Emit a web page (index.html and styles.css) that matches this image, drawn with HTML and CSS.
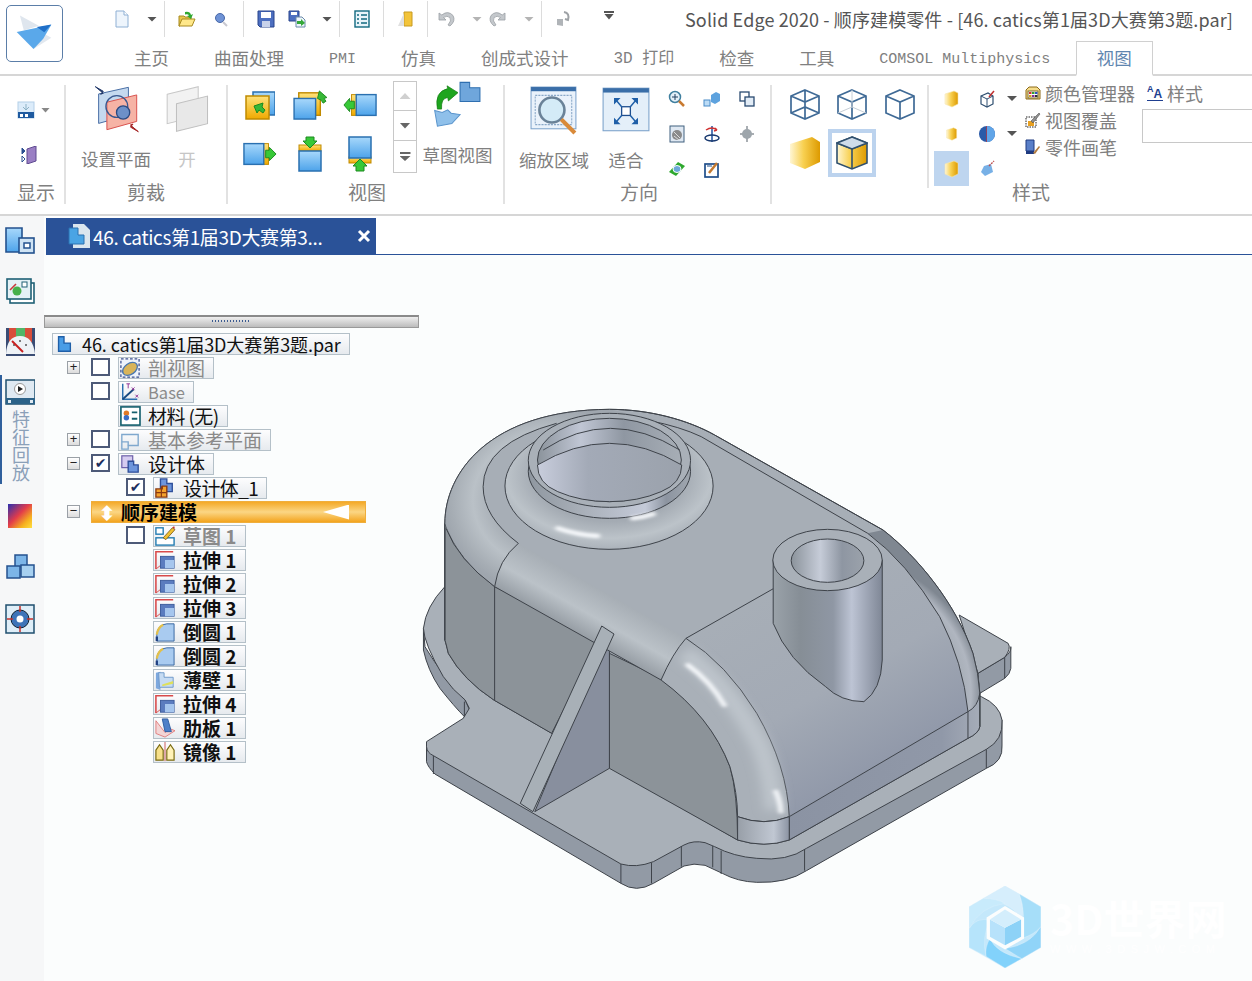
FILE: index.html
```html
<!DOCTYPE html>
<html lang="zh">
<head>
<meta charset="utf-8">
<title>Solid Edge 2020</title>
<link rel="stylesheet" href="styles.css">
</head>
<body>
<svg class="defs" aria-hidden="true">
  <defs>
    <linearGradient id="gy" x1="0" y1="0" x2="0" y2="1"><stop offset="0" stop-color="#ffe27a"/><stop offset="1" stop-color="#efa900"/></linearGradient>
    <linearGradient id="gb" x1="0" y1="0" x2="0" y2="1"><stop offset="0" stop-color="#a8d8fb"/><stop offset="1" stop-color="#4da3ea"/></linearGradient>
    <linearGradient id="gcube" x1="0" y1="0" x2="1" y2="0"><stop offset="0" stop-color="#fff6d4"/><stop offset=".45" stop-color="#f8d050"/><stop offset="1" stop-color="#dd9a00"/></linearGradient>
    <linearGradient id="gheat" x1="0" y1="0" x2="1" y2="1"><stop offset="0" stop-color="#2a2fb0"/><stop offset=".45" stop-color="#e23c4a"/><stop offset=".75" stop-color="#f6b020"/><stop offset="1" stop-color="#ffe040"/></linearGradient>
  </defs>
  <symbol id="doc" viewBox="0 0 18 18"><path d="M3 1h8l4 4v12H3z" fill="#eef5fc" stroke="#8fb0d4"/><path d="M11 1v4h4" fill="#fff" stroke="#8fb0d4"/></symbol>
  <symbol id="open" viewBox="0 0 18 18"><path d="M1 6h5l1 1h6v3H5l-3 6H1z" fill="#e7c64d" stroke="#a88a20"/><path d="M4 9h13l-3 7H1z" fill="#ffe88a" stroke="#a88a20"/><path d="M7 2q5-1 6 3l2-1-2 5-4-3 2-.5q-1-2-4-1z" fill="#30a830"/></symbol>
  <symbol id="find" viewBox="0 0 18 18"><circle cx="8" cy="8" r="4.500" fill="#6f93d6" stroke="#4868a8"/><path d="M11 12l4 4" stroke="#c8c8d0" stroke-width="2"/></symbol>
  <symbol id="save" viewBox="0 0 18 18"><path d="M1 1h16v16H3l-2-2z" fill="#4d6fc0" stroke="#29458c"/><rect x="4" y="2" width="10" height="6" fill="#fff"/><rect x="5" y="11" width="8" height="6" fill="#c8d2ea"/></symbol>
  <symbol id="saveas" viewBox="0 0 18 18"><path d="M1 1h10v10H1z" fill="#4d6fc0" stroke="#29458c"/><rect x="3" y="2" width="6" height="3" fill="#fff"/><path d="M8 7h6l3 3v7H8z" fill="#eef5fc" stroke="#6a8aa8"/><path d="M9 11h4v-2l4 4-4 3v-2H9z" fill="#35a83a"/></symbol>
  <symbol id="prop" viewBox="0 0 18 18"><rect x="2" y="1" width="14" height="16" fill="#e8f4fa" stroke="#126a80" stroke-width="1.400"/><path d="M4 5h2M8 5h6M4 9h2M8 9h6M4 13h2M8 13h6" stroke="#126a80" stroke-width="1.500"/></symbol>
  <symbol id="door" viewBox="0 0 18 18"><path d="M7 2h8v14H7z" fill="#f3c43a" stroke="#c79a20"/><path d="M7 3v13H1z" fill="#e0e0e0"/></symbol>
  <symbol id="undo" viewBox="0 0 18 18"><path d="M2 3v7h7L6.500 7.500Q10 5 13 7.500q2 3-2 7.500l2 1q6-5 3-10.500Q11 0 4.800 5z" fill="#c4c8cc" stroke="#9a9fa5" stroke-width=".8"/></symbol>
  <symbol id="redo" viewBox="0 0 18 18"><path d="M16 3v7H9l2.500-2.500Q8 5 5 7.500q-2 3 2 7.500l-2 1q-6-5-3-10.500Q7 0 13.200 5z" fill="#c4c8cc" stroke="#9a9fa5" stroke-width=".8"/></symbol>
  <symbol id="repeat" viewBox="0 0 18 18"><path d="M3 9l6 0v7l-6-1z" fill="#b0b4b8"/><path d="M10 2q6 1 4 8l-3-1" fill="none" stroke="#9ea2a6" stroke-width="2"/></symbol>

  <symbol id="display" viewBox="0 0 18 18"><rect x="1" y="1" width="16" height="16" fill="#dcecfa" stroke="#b4cfe8"/><rect x="1" y="11" width="16" height="6" fill="#1e5aa0"/><rect x="3" y="13" width="3" height="3" fill="#fff"/><rect x="8" y="13" width="3" height="3" fill="#fff"/><path d="M9 3v5M6 6l3 3 3-3" stroke="#8db2c6" fill="none"/></symbol>
  <symbol id="showp" viewBox="0 0 18 18"><path d="M1 2l3 3-3 3zM1 10l3 3-3 3z" fill="none" stroke="#2b4f90"/><path d="M1 2l3 3-3 3z" fill="#2b4f90"/><path d="M6 3l9-3v15l-9 3z" fill="#9a7fc4" stroke="#5e4a90"/></symbol>
  <symbol id="setplane" viewBox="270 255 145 145"><path d="M290 282l90-20v84l-90 25z" fill="#c5d9ef" stroke="#4a6fa5" stroke-width="3"/><path d="M315 307l90-22v80l-90 25z" fill="#f6b3a5" stroke="#d9534f" stroke-width="3"/><circle cx="345" cy="320" r="33" fill="none" stroke="#39588f" stroke-width="4"/><circle cx="364" cy="338" r="20" fill="#6d90c8" stroke="#2c4a80" stroke-width="4"/><path d="M280 260l24 20-8 3 8-9-24-14z" fill="#22386a" stroke="#22386a" stroke-width="3"/><path d="M410 396l-24-20 8-3-8 9 24 14z" fill="#a32222" stroke="#a32222" stroke-width="3"/></symbol>
  <symbol id="planeoff" viewBox="495 255 135 145"><path d="M505 285l90-22v85l-90 22z" fill="#f2f2f2" stroke="#c8c8c8" stroke-width="3"/><path d="M532 312l90-22v80l-90 22z" fill="#e8e8e8" stroke="#c0c0c0" stroke-width="3"/></symbol>

  <symbol id="v1" viewBox="0 0 30 30"><rect x="8" y="2" width="22" height="23" fill="url(#gb)" stroke="#2a70b0" stroke-width="1.500"/><rect x="1" y="6" width="23" height="23" fill="url(#gy)" stroke="#c08a00" stroke-width="1.500"/><path d="M9 16l9-3-1 4 3 3-2 3-4-3-2 3z" fill="#37b837" stroke="#1c8a20"/></symbol>
  <symbol id="v2" viewBox="0 0 36 32"><rect x="6" y="3" width="23" height="24" fill="url(#gy)" stroke="#c08a00" stroke-width="1.500"/><rect x="1" y="9" width="23" height="22" fill="url(#gb)" stroke="#2a70b0" stroke-width="1.500"/><path d="M26 9l2-8 8 7-3 1 2 3-3 2-2-3z" fill="#37b837" stroke="#1c8a20"/></symbol>
  <symbol id="v3" viewBox="0 0 36 26"><rect x="9" y="2" width="6" height="22" fill="url(#gy)" stroke="#c08a00"/><rect x="14" y="2" width="21" height="22" fill="url(#gb)" stroke="#2a70b0" stroke-width="1.500"/><path d="M1 13l6-7v3h5v8H7v3z" fill="#37c837" stroke="#1c8a20"/></symbol>
  <symbol id="v4" viewBox="0 0 36 26"><rect x="21" y="2" width="6" height="22" fill="url(#gy)" stroke="#c08a00"/><rect x="1" y="2" width="21" height="22" fill="url(#gb)" stroke="#2a70b0" stroke-width="1.500"/><path d="M35 13l-7-7v3h-4v8h4v3z" fill="#37c837" stroke="#1c8a20"/></symbol>
  <symbol id="v5" viewBox="0 0 26 36"><rect x="2" y="9" width="22" height="6" fill="url(#gy)" stroke="#c08a00"/><rect x="2" y="15" width="22" height="20" fill="url(#gb)" stroke="#2a70b0" stroke-width="1.500"/><path d="M13 12l-7-7h3V1h8v4h3z" fill="#37c837" stroke="#1c8a20"/></symbol>
  <symbol id="v6" viewBox="0 0 26 36"><rect x="2" y="21" width="22" height="6" fill="url(#gy)" stroke="#c08a00"/><rect x="2" y="1" width="22" height="21" fill="url(#gb)" stroke="#2a70b0" stroke-width="1.500"/><path d="M13 23l-7 7h3v5h8v-5h3z" fill="#37c837" stroke="#1c8a20"/></symbol>
  <symbol id="sketchview" viewBox="1300 258 140 140"><path d="M1376 262h28v16h30v40h-58z" fill="#6fa6dc" stroke="#2f6fb0" stroke-width="3"/><path d="M1310 390l-8-46 22 6 16-8 10 10 26 4-24 26z" fill="#8fc0ea" stroke="#5a94cc" stroke-width="3"/><path d="M1310 340q-10-50 30-60l-2-8 32 20-28 24-2-10q-20 2-18 34z" fill="#1ea51e" stroke="#127a12" stroke-width="2"/></symbol>
  <symbol id="zoomarea" viewBox="0 0 46 46"><rect x="1" y="1" width="43" height="40" fill="#eaf2fb" stroke="#7ea4cc"/><rect x="1" y="1" width="43" height="4" fill="#3a6ea8"/><rect x="5" y="9" width="35" height="28" fill="none" stroke="#8aa8c8" stroke-dasharray="2 1"/><circle cx="21" cy="23" r="12" fill="#d4ebf7" stroke="#6a8298" stroke-width="2.500"/><path d="M30 32l13 13" stroke="#d98a3a" stroke-width="4"/></symbol>
  <symbol id="fit" viewBox="0 0 44 42"><rect x="1" y="1" width="42" height="39" fill="#e4eff9" stroke="#7ea4cc"/><rect x="1" y="1" width="42" height="4" fill="#3a6ea8"/><rect x="18" y="18" width="8" height="8" fill="#fff" stroke="#1f4f90" stroke-width="1.200"/><path d="M11 10h6l-6 6zM33 10h-6l6 6zM11 34h6l-6-6zM33 34h-6l6-6z" fill="#1f5fa8"/><path d="M13 12l5 6M31 12l-5 6M13 32l5-6M31 32l-5-6" stroke="#1f5fa8" stroke-width="1.300"/></symbol>
  <symbol id="s1" viewBox="0 0 18 18"><circle cx="7" cy="7" r="5.500" fill="#e4f0f9" stroke="#3f7f9f" stroke-width="1.500"/><path d="M7 4v6M4 7h6" stroke="#204060"/><path d="M11 11l5 5" stroke="#c87a30" stroke-width="2.500"/></symbol>
  <symbol id="s2" viewBox="0 0 18 18"><path d="M8 5l5-3 4 2v7l-5 3-4-2z" fill="#5da2de"/><rect x="1" y="10" width="6" height="6" fill="#bcdcf6" stroke="#4a8cc8"/></symbol>
  <symbol id="s3" viewBox="0 0 18 18"><rect x="2" y="2" width="9" height="9" fill="#fff" stroke="#2a4a70" stroke-width="1.300"/><rect x="7" y="7" width="9" height="9" fill="#e2ecf6" stroke="#2a4a70" stroke-width="1.300"/></symbol>
  <symbol id="s4" viewBox="0 0 18 18"><rect x="2" y="1" width="14" height="16" fill="#dfe8f2" stroke="#40607f"/><circle cx="9" cy="10" r="5" fill="#8a8a8a"/><path d="M6 7l6 6M6 11l5 4" stroke="#ddd"/></symbol>
  <symbol id="s5" viewBox="0 0 18 18"><path d="M9 1v16" stroke="#2050a0" stroke-width="1.500"/><ellipse cx="9" cy="13" rx="7" ry="3" fill="none" stroke="#1a3a70" stroke-width="1.500"/><path d="M3 5q6-4 11 0M14 5l-2-2M14 5l-3 1" stroke="#d03030" fill="none" stroke-width="1.500"/></symbol>
  <symbol id="s6" viewBox="0 0 18 18"><path d="M9 1v16M2 9h14" stroke="#8d949a" stroke-width="1.500"/><circle cx="9" cy="9" r="5" fill="#9ea6ac"/></symbol>
  <symbol id="s7" viewBox="0 0 18 18"><path d="M1 12l9-10 7 4-9 10z" fill="#2ea82e"/><ellipse cx="9" cy="9" rx="4" ry="3.500" fill="#6ba8d8" stroke="#fff"/></symbol>
  <symbol id="s8" viewBox="0 0 18 18"><rect x="2" y="4" width="13" height="13" fill="#fff" stroke="#1f4e8a" stroke-width="1.700"/><path d="M6 13l8-10" stroke="#c47a30" stroke-width="2.500"/><path d="M4 6h5" stroke="#1f4e8a"/></symbol>
  <symbol id="wire1" viewBox="0 0 32 32"><path d="M16 2l14 6v17l-14 6-14-6V8zM2 8l14 6 14-6M16 14v17M16 2v17M2 25l14-6 14 6" fill="none" stroke="#3f6a96" stroke-width="1.700"/></symbol>
  <symbol id="wire2" viewBox="0 0 32 32"><path d="M16 2l14 6v17l-14 6-14-6V8zM2 8l14 6 14-6M16 14v17" fill="none" stroke="#3f6a96" stroke-width="1.700"/><path d="M16 2v17M2 25l14-6 14 6" fill="none" stroke="#c6ced6"/></symbol>
  <symbol id="wire3" viewBox="0 0 32 32"><path d="M16 2l14 6v17l-14 6-14-6V8zM2 8l14 6 14-6M16 14v17" fill="none" stroke="#3f6a96" stroke-width="1.700"/></symbol>
  <symbol id="cube1" viewBox="0 0 32 34"><path d="M1 8L23 1L31 6V26L16 33L1 27Z" fill="url(#gcube)"/></symbol>
  <symbol id="cube2" viewBox="0 0 32 34"><path d="M16 1l15 6v20l-15 6-15-6V7z" fill="url(#gcube)" stroke="#30506e" stroke-width="1.600"/><path d="M1 7l15 6 15-6M16 13v20" fill="none" stroke="#30506e" stroke-width="1.600"/><path d="M16 1l15 6-15 6L1 7z" fill="#cfdcea" stroke="#30506e" stroke-width="1.600"/></symbol>
  <symbol id="c1" viewBox="0 0 18 18"><path d="M2 4L11 1L15 3V14L9 17L2 14Z" fill="url(#gcube)" stroke="#f6e6ae" stroke-width=".6"/></symbol>
  <symbol id="c2" viewBox="0 0 18 18"><path d="M3 6l7-3 5 3v8l-6 3-6-3z" fill="#fff" stroke="#2e4e70" stroke-width="1.200"/><path d="M3 6l6 3v8M9 9l6-3" fill="none" stroke="#2e4e70"/><path d="M11 7l5-6" stroke="#c23030" stroke-width="1.500"/></symbol>
  <symbol id="c3" viewBox="0 0 18 18"><circle cx="9" cy="9" r="8" fill="#2a5aa8"/><path d="M9 1v16" stroke="#d03030" stroke-width="1.200"/><path d="M9 1a8 8 0 0 1 0 16z" fill="#60a5e8"/></symbol>
  <symbol id="c4" viewBox="0 0 18 18"><path d="M6 6l7-2 2 8-8 4-4-4z" fill="#77b0e6"/><path d="M11 6l5-5" stroke="#c05050" stroke-dasharray="2 1" stroke-width="1.400"/></symbol>
  <symbol id="pal" viewBox="0 0 16 16"><path d="M1 5l3-3h8l3 3v9H1z" fill="#f6dd8a" stroke="#8c6a1a"/><rect x="3" y="6" width="10" height="7" fill="#fff" stroke="#7a6a30"/><rect x="4" y="7" width="2.500" height="2" fill="#d03030"/><rect x="7" y="7" width="2.500" height="2" fill="#30a030"/><rect x="10" y="7" width="2.500" height="2" fill="#3050c0"/><rect x="4" y="10" width="2.500" height="2" fill="#d0a020"/><rect x="7" y="10" width="2.500" height="2" fill="#8030a0"/><rect x="10" y="10" width="2.500" height="2" fill="#303030"/></symbol>
  <symbol id="over" viewBox="0 0 16 16"><rect x="1" y="5" width="10" height="10" fill="#fff" stroke="#222" stroke-dasharray="1.500 1"/><rect x="3" y="9" width="6" height="5" fill="#e8a020"/><path d="M6 9l8-8 1 1-7 9z" fill="#909090" stroke="#404040" stroke-width=".5"/></symbol>
  <symbol id="brush" viewBox="0 0 16 16"><path d="M1 1h8v11H1z" fill="#5a7fc8" stroke="#1f3a80"/><path d="M1 12h8v3H1z" fill="#1f3a80"/><path d="M8 14l6-7 1 1-5 7z" fill="#b07a40"/></symbol>
  <symbol id="close" viewBox="0 0 14 14"><path d="M2 2l10 10M12 2L2 12" stroke="#fff" stroke-width="3"/></symbol>
  <symbol id="tabdoc" viewBox="0 0 22 24"><path d="M5 0h11l6 6v18H5z" fill="#dbe6ee"/><path d="M1 4h9v7h6v9H1z" fill="#4aa4e4" stroke="#2a70b0"/></symbol>

  <symbol id="sb1" viewBox="0 0 30 30"><path d="M1 3h16v24H1z" fill="url(#gb)" stroke="#24528e" stroke-width="1.600"/><rect x="14" y="13" width="15" height="15" fill="#cfe3f4" stroke="#24528e" stroke-width="1.600"/><rect x="19" y="18" width="6" height="5" fill="#fff" stroke="#24528e" stroke-width="1.500"/></symbol>
  <symbol id="sb2" viewBox="0 0 30 30"><rect x="5" y="7" width="24" height="20" fill="#fff" stroke="#1f6075" stroke-width="1.600"/><rect x="2" y="3" width="24" height="20" fill="#e4f1f6" stroke="#1f6075" stroke-width="1.600"/><path d="M5 14l6-6" stroke="#c83a3a" stroke-width="1.600"/><circle cx="12" cy="15" r="4.500" fill="#46b04a"/><rect x="17" y="6" width="5" height="5" fill="#fff" stroke="#1f6075"/></symbol>
  <symbol id="sb3" viewBox="0 0 30 30"><path d="M1 1h29v28H1z" fill="#3a4c74"/><path d="M4 1h23v14H4z" fill="#d84d3a"/><path d="M11 1h9v14h-9z" fill="#52b567"/><path d="M1 27Q2 9 15 9t15 18z" fill="#eef2f6"/><circle cx="9" cy="18" r="1" fill="#555"/><circle cx="15" cy="14" r="1" fill="#555"/><circle cx="21" cy="18" r="1" fill="#555"/><path d="M7 14l11 11" stroke="#c82020" stroke-width="2"/></symbol>
  <symbol id="sb4" viewBox="0 0 30 30"><rect x="1" y="2" width="29" height="24" fill="#dfe9f2" stroke="#1f4f6e" stroke-width="1.500"/><rect x="1" y="20" width="29" height="6" fill="#2c6288"/><rect x="3" y="22" width="3" height="3" fill="#dfe9f2"/><rect x="25" y="22" width="3" height="3" fill="#dfe9f2"/><circle cx="15" cy="11" r="5.500" fill="#fff" stroke="#999"/><path d="M13 8l5 3-5 3z" fill="#222"/></symbol>
  <symbol id="sb5" viewBox="0 0 30 30"><rect x="3" y="3" width="24" height="24" fill="url(#gheat)"/></symbol>
  <symbol id="sb6" viewBox="0 0 30 30"><rect x="10" y="2" width="12" height="12" fill="#7cb5e8" stroke="#24528e" stroke-width="1.500"/><rect x="2" y="13" width="13" height="12" fill="#7cb5e8" stroke="#24528e" stroke-width="1.500"/><rect x="16" y="12" width="13" height="12" fill="#a7d0f0" stroke="#24528e" stroke-width="1.500"/></symbol>
  <symbol id="sb7" viewBox="0 0 30 30"><rect x="1" y="1" width="28" height="28" fill="#dfeef8" stroke="#1f4f6e" stroke-width="1.500"/><circle cx="15" cy="15" r="9" fill="#3e74b8" stroke="#123"/><circle cx="15" cy="15" r="3.500" fill="#fff"/><path d="M15 2v6M15 22v6M2 15h6M22 15h6" stroke="#c8302a" stroke-width="1.500"/></symbol>

  <symbol id="t-root" viewBox="0 0 22 22"><path d="M5 3h6v7h7v9H5z" fill="#4a9de6" stroke="#1f5fa8" stroke-width="1.500"/></symbol>
  <symbol id="t-sec" viewBox="0 0 22 22"><rect x="1" y="1" width="20" height="20" fill="#eef3fb" stroke="#3a4f90" stroke-dasharray="3 2" stroke-width="1.400"/><ellipse cx="11" cy="12" rx="9" ry="6" transform="rotate(-35 11 12)" fill="#d9b45a" stroke="#4a78b0" stroke-width="1.500"/></symbol>
  <symbol id="t-base" viewBox="0 0 22 22"><path d="M3 2v17h16" fill="none" stroke="#2a6fb0" stroke-width="1.600"/><path d="M3 19L15 8" stroke="#1a4a80" stroke-width="2"/><path d="M7 2h4M9 2v5" stroke="#8a2a90"/><path d="M13 6l3 3M16 6l-3 3M17 14l3 3M20 14l-3 3" stroke="#8a2a90"/></symbol>
  <symbol id="t-mat" viewBox="0 0 22 22"><rect x="1" y="1" width="21" height="20" fill="#fff" stroke="#15606e" stroke-width="1.800"/><circle cx="7" cy="8" r="3" fill="#e07a28"/><circle cx="7" cy="13" r="3" fill="#3a6ec8"/><path d="M13 7h6M13 14h6" stroke="#15606e" stroke-width="2"/></symbol>
  <symbol id="t-plane" viewBox="0 0 22 22"><path d="M2 5h18v12H9v4H2z" fill="none" stroke="#7fa8ce" stroke-width="1.500"/><path d="M2 13h7v4" fill="none" stroke="#7fa8ce" stroke-width="1.500"/></symbol>
  <symbol id="t-body" viewBox="0 0 22 22"><rect x="2" y="2" width="12" height="13" fill="#d6ccf0" stroke="#6a5ea8" stroke-width="1.300"/><path d="M9 8h6v4h5v8H9z" fill="#6d95dc" stroke="#2f4f9a" stroke-width="1.500"/></symbol>
  <symbol id="t-body1" viewBox="0 0 22 22"><path d="M6 1h7v5h6v9H6z" fill="#6d95dc" stroke="#2f4f9a" stroke-width="1.500"/><path d="M1 12h7v-3h5v12H1z" fill="#f4a22c" stroke="#8a3a10" stroke-width="1.500"/><path d="M7 9v12M1 16h12" stroke="#8a3a10" stroke-width="1.300"/></symbol>
  <symbol id="t-sketch" viewBox="0 0 22 22"><rect x="1" y="2" width="8" height="7" fill="#fff" stroke="#1f7ab0" stroke-width="1.500"/><rect x="1" y="13" width="20" height="8" fill="#fff" stroke="#1f7ab0" stroke-width="1.500"/><path d="M9 13l10-11 3 2-10 11z" fill="#f0c030" stroke="#6a4a10" stroke-width=".8"/><path d="M19 2l2-2 1 3z" fill="#c83030"/></symbol>
  <symbol id="t-ext" viewBox="0 0 22 22"><path d="M20 2H1v19" fill="none" stroke="#d84a4a" stroke-width="1.700"/><path d="M1 21l5-4" stroke="#d84a4a"/><rect x="6" y="7" width="15" height="13" fill="#5b7cbf" stroke="#3a5a9a"/><rect x="11" y="11" width="10" height="9" fill="#a6c6ee"/></symbol>
  <symbol id="t-rnd" viewBox="0 0 22 22"><path d="M2 21V13Q3 3 13 2h8v19z" fill="#a9cbf0" stroke="#2f5f9a"/><path d="M2 14Q3 6 9 3" fill="none" stroke="#e3c04a" stroke-width="2.500"/><path d="M2 21v-5" stroke="#1f3f80" stroke-width="2.500"/></symbol>
  <symbol id="t-thin" viewBox="0 0 22 22"><path d="M1 3l5-1v20l-5-2z" fill="#7ca8de"/><path d="M4 3h6v5h10v11H5z" fill="#c6dbf3" stroke="#6b96c8"/><path d="M8 16l12-4v3l-12 3z" fill="#dfe05a"/></symbol>
  <symbol id="t-rib" viewBox="0 0 22 22"><path d="M1 3v14l10 4 11-7-5-2-6 4z" fill="#f3d5d5" stroke="#e07a7a"/><path d="M8 1h6l4 14h-7z" fill="#4e80c8" stroke="#2a5aa0"/></symbol>
  <symbol id="t-mir" viewBox="0 0 22 22"><path d="M1 9l4-6 4 6v11H1z" fill="#f7e08a" stroke="#7a6a10" stroke-width="1.300"/><path d="M13 9l4-6 4 6v11h-8z" fill="#fff2b8" stroke="#7a6a10" stroke-width="1.300"/><path d="M11 0v21" stroke="#c85050"/></symbol>
</svg>

<div class="app">
  <header class="header">
    <div class="logo">
      <svg class="logo-svg" viewBox="18 15 170 170"><path d="M58 44l58 32-46 15z" fill="#dfe6ee"/><path d="M100 148l55-35-25-14z" fill="#e2e8ef"/><path d="M48 95l107-22-25 43-30 32z" fill="#5aa8ea"/><path d="M110 80l45-8-22 24z" fill="#1f6fc8"/></svg>
    </div>
    <div class="header-main">
      <div class="qat">
        <svg class="qi m50"><use href="#doc"/></svg><span class="caret m16"></span><span class="qsep m7"></span>
        <svg class="qi m13"><use href="#open"/></svg><svg class="qi m16"><use href="#find"/></svg><span class="qsep m13"></span>
        <svg class="qi m13"><use href="#save"/></svg><svg class="qi m13"><use href="#saveas"/></svg><span class="caret m16"></span><span class="qsep m7"></span>
        <svg class="qi m13"><use href="#prop"/></svg><span class="qsep m12"></span>
        <svg class="qi m13"><use href="#door"/></svg><span class="qsep m12"></span>
        <svg class="qi m9"><use href="#undo"/></svg><span class="caret pale m17"></span>
        <svg class="qi m7"><use href="#redo"/></svg><span class="caret pale m17"></span><span class="qsep m7"></span>
        <svg class="qi m12"><use href="#repeat"/></svg>
        <span class="custom m32"></span>
        <div class="title">Solid Edge 2020 - 顺序建模零件 - [46. catics第1届3D大赛第3题.par]</div>
      </div>
      <nav class="tabs">
        <span class="tab">主页</span><span class="tab">曲面处理</span><span class="tab mono">PMI</span><span class="tab">仿真</span><span class="tab">创成式设计</span><span class="tab mono m3d">3D 打印</span><span class="tab">检查</span><span class="tab">工具</span><span class="tab mono">COMSOL Multiphysics</span><span class="tab active">视图</span>
      </nav>
    </div>
  </header>

  <section class="ribbon">
    <div class="group g1">
      <div class="body g1-body">
        <div class="g1-row"><svg class="i18"><use href="#display"/></svg><span class="caret g1-caret"></span></div>
        <div class="g1-row2"><svg class="i18"><use href="#showp"/></svg></div>
      </div>
      <div class="glabel pl8">显示</div>
    </div>
    <div class="sep"></div>
    <div class="group g2">
      <div class="body g2-body">
        <div class="big w70"><svg class="big-i"><use href="#setplane"/></svg><span class="big-t">设置平面</span></div>
        <div class="big w50 dim"><svg class="big-i"><use href="#planeoff"/></svg><span class="big-t">开</span></div>
      </div>
      <div class="glabel">剪裁</div>
    </div>
    <div class="sep"></div>
    <div class="group g3">
      <div class="body g3-body">
        <div class="vgrid">
          <svg class="vi30"><use href="#v1"/></svg><svg class="vi34"><use href="#v2"/></svg><svg class="vi34"><use href="#v3"/></svg>
          <svg class="vi34"><use href="#v4"/></svg><svg class="vi36"><use href="#v5"/></svg><svg class="vi36"><use href="#v6"/></svg>
        </div>
        <div class="scroller"><span class="sc a"><i class="up"></i></span><span class="sc b"><i class="dn"></i></span><span class="sc c"><i class="dn bar"></i></span></div>
        <div class="big w71 ml5"><svg class="big-i"><use href="#sketchview"/></svg><span class="big-t">草图视图</span></div>
      </div>
      <div class="glabel pl3">视图</div>
    </div>
    <div class="sep"></div>
    <div class="group g4">
      <div class="body g4-body">
        <div class="big w72"><svg class="big-i"><use href="#zoomarea"/></svg><span class="big-t">缩放区域</span></div>
        <div class="big w36 ml18"><svg class="big-i"><use href="#fit"/></svg><span class="big-t">适合</span></div>
        <div class="sgrid">
          <svg class="i18"><use href="#s1"/></svg><svg class="i18"><use href="#s2"/></svg><svg class="i18"><use href="#s3"/></svg>
          <svg class="i18"><use href="#s4"/></svg><svg class="i18"><use href="#s5"/></svg><svg class="i18"><use href="#s6"/></svg>
          <svg class="i18"><use href="#s7"/></svg><svg class="i18"><use href="#s8"/></svg>
        </div>
      </div>
      <div class="glabel pl3">方向</div>
    </div>
    <div class="sep"></div>
    <div class="group g5">
      <div class="body g5-body">
        <div class="cubes">
          <svg class="cb"><use href="#wire1"/></svg><svg class="cb"><use href="#wire2"/></svg><svg class="cb"><use href="#wire3"/></svg>
          <svg class="cb"><use href="#cube1"/></svg><span class="cube-sel"><svg class="cb"><use href="#cube2"/></svg></span>
        </div>
        <div class="sep inner"></div>
        <div class="styles">
          <span class="st"><svg class="i18"><use href="#c1"/></svg></span><span class="st"><svg class="i18"><use href="#c2"/></svg></span><span class="caret"></span>
          <span class="st"><svg class="i14"><use href="#c1"/></svg></span><span class="st"><svg class="i18"><use href="#c3"/></svg></span><span class="caret"></span>
          <span class="st on"><svg class="i18"><use href="#c1"/></svg></span><span class="st"><svg class="i18"><use href="#c4"/></svg></span>
        </div>
        <div class="list">
          <div class="li"><svg class="i16"><use href="#pal"/></svg><span>颜色管理器</span></div>
          <div class="li"><svg class="i16"><use href="#over"/></svg><span>视图覆盖</span></div>
          <div class="li"><svg class="i16"><use href="#brush"/></svg><span>零件画笔</span></div>
        </div>
        <div class="stylebox">
          <div class="li li2"><span class="aa"><span class="aa-s">A</span><span class="aa-l">A</span></span><span>样式</span></div>
          <div class="combo"></div>
        </div>
      </div>
      <div class="glabel pl38">样式</div>
    </div>
  </section>

  <main class="main">
    <aside class="side">
      <svg class="sb"><use href="#sb1"/></svg>
      <svg class="sb"><use href="#sb2"/></svg>
      <svg class="sb"><use href="#sb3"/></svg>
      <div class="side-active">
        <svg class="sb"><use href="#sb4"/></svg>
        <div class="vtext">特征回放</div>
      </div>
      <svg class="sb first"><use href="#sb5"/></svg>
      <svg class="sb"><use href="#sb6"/></svg>
      <svg class="sb tight"><use href="#sb7"/></svg>
    </aside>
    <div class="canvas">
      <div class="docbar">
        <div class="doctab"><svg class="doctab-i"><use href="#tabdoc"/></svg><span class="doctab-t">46. catics第1届3D大赛第3...</span><svg class="doctab-x"><use href="#close"/></svg></div>
      </div>
      <div class="splitter"><span class="grip"></span></div>
      <div class="tree">
        <div class="row"><span class="node root"><svg class="ti"><use href="#t-root"/></svg><span class="nt">46. catics第1届3D大赛第3题.par</span></span></div>
        <div class="row"><span class="exp">+</span><span class="chk"></span><span class="node dim"><svg class="ti"><use href="#t-sec"/></svg><span class="nt">剖视图</span></span></div>
        <div class="row"><span class="exp none"></span><span class="chk"></span><span class="node dim"><svg class="ti"><use href="#t-base"/></svg><span class="nt latin">Base</span></span></div>
        <div class="row"><span class="exp none"></span><span class="chk none"></span><span class="node"><svg class="ti"><use href="#t-mat"/></svg><span class="nt squeeze">材料 (无)</span></span></div>
        <div class="row"><span class="exp">+</span><span class="chk"></span><span class="node dim"><svg class="ti"><use href="#t-plane"/></svg><span class="nt">基本参考平面</span></span></div>
        <div class="row"><span class="exp">−</span><span class="chk on">✔</span><span class="node"><svg class="ti"><use href="#t-body"/></svg><span class="nt">设计体</span></span></div>
        <div class="row sub"><span class="chk on">✔</span><span class="node"><svg class="ti"><use href="#t-body1"/></svg><span class="nt squeeze">设计体_1</span></span></div>
        <div class="row"><span class="exp">−</span><span class="seqbar"><span class="seq-arrows">⬍</span><span class="seq-t">顺序建模</span><span class="seq-flag"></span></span></div>
        <div class="row sub"><span class="chk"></span><span class="node dim b"><svg class="ti"><use href="#t-sketch"/></svg><span class="nt">草图 1</span></span></div>
        <div class="row feat"><span class="node b"><svg class="ti"><use href="#t-ext"/></svg><span class="nt">拉伸 1</span></span></div>
        <div class="row feat"><span class="node b"><svg class="ti"><use href="#t-ext"/></svg><span class="nt">拉伸 2</span></span></div>
        <div class="row feat"><span class="node b"><svg class="ti"><use href="#t-ext"/></svg><span class="nt">拉伸 3</span></span></div>
        <div class="row feat"><span class="node b"><svg class="ti"><use href="#t-rnd"/></svg><span class="nt">倒圆 1</span></span></div>
        <div class="row feat"><span class="node b"><svg class="ti"><use href="#t-rnd"/></svg><span class="nt">倒圆 2</span></span></div>
        <div class="row feat"><span class="node b"><svg class="ti"><use href="#t-thin"/></svg><span class="nt">薄壁 1</span></span></div>
        <div class="row feat"><span class="node b"><svg class="ti"><use href="#t-ext"/></svg><span class="nt">拉伸 4</span></span></div>
        <div class="row feat"><span class="node b"><svg class="ti"><use href="#t-rib"/></svg><span class="nt">肋板 1</span></span></div>
        <div class="row feat"><span class="node b"><svg class="ti"><use href="#t-mir"/></svg><span class="nt">镜像 1</span></span></div>
      </div>

      <svg class="model" viewBox="0 0 1568 1500" preserveAspectRatio="none">
        <defs>
          <linearGradient id="mSurf" gradientUnits="userSpaceOnUse" x1="900" y1="500" x2="1300" y2="1100"><stop offset="0" stop-color="#a8afb7"/><stop offset=".55" stop-color="#a3aab5"/><stop offset="1" stop-color="#8d95a7"/></linearGradient>
          <linearGradient id="mBoss" x1="0" y1="0" x2="1" y2="0"><stop offset="0" stop-color="#9aa2a9"/><stop offset=".25" stop-color="#868e96"/><stop offset=".55" stop-color="#8f97a4"/><stop offset=".72" stop-color="#bdc4d4"/><stop offset="1" stop-color="#7f8796"/></linearGradient>
          <linearGradient id="mHole" x1="0" y1="0" x2="1" y2="0"><stop offset="0" stop-color="#8b939b"/><stop offset=".4" stop-color="#c6ccd8"/><stop offset=".7" stop-color="#8e96a2"/><stop offset="1" stop-color="#9ba2ab"/></linearGradient>
          <linearGradient id="mFloor" x1="0" y1="0" x2="1" y2="0"><stop offset="0" stop-color="#c8cddc"/><stop offset=".35" stop-color="#a3aab7"/><stop offset="1" stop-color="#9ba2ac"/></linearGradient>
          <linearGradient id="mWallIn" x1="0" y1="0" x2="1" y2="0"><stop offset="0" stop-color="#8b939b"/><stop offset=".3" stop-color="#c0c6d4"/><stop offset=".6" stop-color="#8f97a2"/><stop offset="1" stop-color="#a7aeb6"/></linearGradient>
          <linearGradient id="mCollar" x1="0" y1="0" x2="1" y2="0"><stop offset="0" stop-color="#8f97a0"/><stop offset=".3" stop-color="#a6adb6"/><stop offset=".72" stop-color="#c4cad8"/><stop offset=".85" stop-color="#8c94a0"/><stop offset="1" stop-color="#a0a7af"/></linearGradient>
          <linearGradient id="mCorner" x1="0" y1="0" x2="1" y2="0"><stop offset="0" stop-color="#989fa8"/><stop offset=".7" stop-color="#c0c7d2"/><stop offset="1" stop-color="#8b93a2"/></linearGradient>
          <linearGradient id="mBand" gradientUnits="userSpaceOnUse" x1="475" y1="572" x2="399" y2="690"><stop offset="0" stop-color="#a7aeb5"/><stop offset=".55" stop-color="#bbc2c8"/><stop offset="1" stop-color="#979ea5"/></linearGradient>
          <radialGradient id="mRound" gradientUnits="userSpaceOnUse" cx="340" cy="300" r="280"><stop offset="0" stop-color="#a8afb7"/><stop offset=".55" stop-color="#a9b0b7"/><stop offset=".72" stop-color="#bac1c7"/><stop offset=".92" stop-color="#a6adb4"/><stop offset="1" stop-color="#9fa6ae"/></radialGradient>
          <radialGradient id="mRight" gradientUnits="userSpaceOnUse" cx="1040" cy="880" r="430"><stop offset="0" stop-color="#a4abb5"/><stop offset=".86" stop-color="#a6adb6"/><stop offset=".93" stop-color="#b0b6c0"/><stop offset="1" stop-color="#7f8791"/></radialGradient>
          <radialGradient id="mNeck" cx=".5" cy=".42" r=".6"><stop offset="0" stop-color="#a0a7af"/><stop offset=".6" stop-color="#a4abb3"/><stop offset=".82" stop-color="#bcc3c9"/><stop offset="1" stop-color="#a7aeb6"/></radialGradient>
          <linearGradient id="mLower" x1="0" y1="0" x2="1" y2="0"><stop offset="0" stop-color="#8b93a3"/><stop offset=".8" stop-color="#9098a8"/><stop offset="1" stop-color="#a5acb8"/></linearGradient>
          <filter id="soft" x="-40%" y="-40%" width="180%" height="180%"><feGaussianBlur stdDeviation="5"/></filter>
          <filter id="softer" x="-40%" y="-40%" width="180%" height="180%"><feGaussianBlur stdDeviation="14"/></filter>
        </defs>
        <g class="edge">
          <path class="f-side" d="M9 685V750Q20 810 52 865Q90 920 116 950L113 958L140 958L118 900Q60 830 13 740Z"/>
          <path class="f-side" d="M1528 772Q1546 755 1544 740V805Q1542 822 1528 835L1463 880L1458 820Z"/>
          <path class="f-top" d="M1409 645L1537 730Q1546 745 1528 772L1458 820Z"/>
          <path class="f-side" d="M17 1030V1085Q20 1100 39 1122L525 1450Q565 1480 610 1450L690 1398Q715 1388 745 1396L790 1420Q830 1445 880 1447Q960 1450 1010 1412L1480 1105Q1525 1085 1521 1035V960Z"/>
          <path class="f-top" d="M65 560Q15 620 9 685Q10 730 61 830Q85 870 118 900L129 925L113 955L17 1025V1040Q18 1058 35 1067L525 1392Q565 1405 610 1385L690 1335Q715 1320 745 1328L770 1340Q820 1370 880 1375Q960 1385 1010 1345L1480 1048Q1525 1020 1521 960Q1515 915 1467 890L1000 700Z"/>
          <path class="thin" d="M35 1067V1122M116 905V950M525 1392V1450M605 1388V1450M683 1338V1400M765 1338V1402M787 1352V1422M1005 1348V1412M1480 1048V1105M1528 772V835"/>
          <path class="f-surf" d="M65 720V370C65 220 180 30 495 28C600 28 700 60 770 105L1210 390C1300 470 1400 610 1445 760Q1460 820 1463 880V980Q1460 1000 1432 1015L965 1320Q900 1345 830 1320L193 900Q113 840 74 760Q68 730 65 720Z"/>
          <path class="f-wall" d="M65 370V720Q68 730 74 760Q113 840 193 900L344 1000L470 715L195 560Q100 480 65 370Z"/>
          <path class="thin" d="M195 560V900"/>
          <path class="f-wall" d="M495 760L640 840Q760 950 810 1100Q830 1180 830 1320L495 1105Z"/>
          <path class="f-rib" d="M495 700V1105L300 1235Z"/>
          <path class="f-round nost" d="M65 370C65 220 180 30 495 28L620 60L357 70Q165 130 165 260Q170 350 257 430Q205 480 195 560Q100 480 65 370Z"/>
          <path class="f-band nost" d="M257 430L695 715Q660 760 630 840L195 560Q205 480 257 430Z"/>
          <path class="thin" d="M68 385Q100 480 195 560L630 840M257 430Q205 480 195 560"/>
          <path class="f-right nost" d="M695 715L925 565L1170 400Q1271 485 1358 650Q1420 790 1432 935L965 1250Q960 1100 880 940Q800 790 695 715Z"/>
          <path class="f-rband nost" d="M1170 400L1210 390C1300 470 1400 610 1445 760Q1460 820 1463 880Q1458 920 1432 935Q1420 790 1358 650Q1271 485 1170 400Z"/>
          <path class="f-lower" d="M965 1250L1432 935Q1458 920 1463 880V980Q1460 1000 1432 1015L965 1320Z"/>
          <path class="thin" d="M1432 935V1015M1432 935Q1420 790 1358 650Q1271 485 1170 400"/>
          <path class="f-bandf" d="M695 715Q800 790 880 940Q960 1100 965 1250Q900 1280 830 1250Q830 1180 810 1100Q760 950 630 840Q660 760 695 715Z"/>
          <path class="f-corner" d="M830 1250Q900 1280 965 1250V1320Q900 1345 830 1320Z"/>
          <path class="f-ribtop" d="M475 678L507 702L295 1235L262 1210Z"/>
          <path class="thin" d="M735 110L1170 400M600 62Q680 80 735 110M257 430Q165 350 165 260Q165 130 357 70M695 715L925 565"/>
          <path class="thin" d="M65 720V370C65 220 180 30 495 28C600 28 700 60 770 105L1210 390C1300 470 1400 610 1445 760Q1460 820 1463 880V980"/>
          <ellipse class="f-neck" cx="494" cy="258" rx="272" ry="190"/>
          <ellipse class="f-collar" cx="495" cy="214" rx="212" ry="141"/>
          <ellipse class="f-lip" cx="495" cy="181" rx="212" ry="141"/>
          <ellipse class="f-holew" cx="495" cy="180" rx="188" ry="125"/>
          <path class="thin" d="M322 150Q495 20 679 150"/>
          <path class="f-floor" d="M307 195Q495 65 684 195Q684 250 630 275Q570 305 495 305Q420 305 360 275Q307 250 307 195Z"/>
          <path class="f-bossc" d="M923 480V670Q960 780 1060 860Q1100 905 1160 905Q1205 870 1208 780V480Z"/>
          <ellipse class="f-top" cx="1065" cy="480" rx="143" ry="92"/>
          <ellipse class="f-hole" cx="1065" cy="482" rx="95" ry="65"/>
        </g>
        <g class="glow2" filter="url(#softer)">
          <path d="M690 760Q810 860 890 1040Q920 1130 925 1230"/>
        </g>
        <g class="glow" filter="url(#soft)">
          <path d="M360 385Q410 405 465 408"/>
          <path d="M700 795Q760 845 795 915"/>
          <path d="M930 1175Q942 1205 943 1235"/>
          <path d="M555 355Q585 352 610 342"/>
        </g>
      </svg>

      <div class="wm">
        <svg class="wm-hex" viewBox="58 48 214 245">
          <path class="wb" d="M165 48L272 110V232L165 293L58 232V110Z" fill="#c4e8fb"/>
          <path class="wb" d="M165 48L208 72Q225 125 213 150Q195 100 100 85Z" fill="#d6eefc"/>
          <path class="wb" d="M208 72L272 110V170Q250 195 213 205Q230 130 208 72Z" fill="#a6def9"/>
          <path class="wb" d="M272 170V232L215 265Q190 250 165 235Q240 225 272 170Z" fill="#90d4f8"/>
          <path class="wb" d="M215 265L165 293L108 258Q105 230 120 205Q140 250 215 265Z" fill="#82d2fb"/>
          <path class="wb" d="M108 258L58 232V175Q80 140 120 150Q95 200 108 258Z" fill="#b6e4fb"/>
          <path class="wb" d="M58 175V110L100 85Q140 85 165 100Q90 110 58 175Z" fill="#c8ebfc"/>
          <path d="M165 108L222 142V205L165 238L110 205V142Z" fill="#fbfdfd"/>
          <path d="M120 148L165 173V225L120 200Z" fill="#b7e2fb"/>
          <path d="M213 148L165 173V225L213 200Z" fill="#8dd2f7"/>
          <path d="M165 118L213 148L165 173L120 148Z" fill="#d4eefc"/>
        </svg>
        <div class="wm-text"><div class="wm-big">3D世界网</div><div class="wm-small">WWW.3DSJW.COM</div></div>
      </div>
    </div>
  </main>
</div>
</body>
</html>
```

FILE: styles.css
```css
* { box-sizing: border-box; }
html, body { margin: 0; padding: 0; background: #fff; }
body { font-family: "Noto Sans CJK SC", "Liberation Sans", sans-serif; overflow: hidden; }
.defs { position: absolute; width: 0; height: 0; }
.app { width: 1252px; height: 981px; display: flex; flex-direction: column; }

.header { height: 76px; display: flex; border-bottom: 2px solid #d6d6d6; flex: none; }
.logo { flex: none; width: 57px; height: 57px; margin: 5px 0 0 6px; border: 1.5px solid #5b7ea8; border-radius: 5px; background: #fff; }
.logo-svg { display: block; width: 100%; height: 100%; }
.header-main { flex: 1; display: flex; flex-direction: column; min-width: 0; }
.qat { height: 41px; display: flex; align-items: center; padding-bottom: 3px; }
.qi { flex: none; width: 18px; height: 18px; }
.m7 { margin-left: 7px; } .m9 { margin-left: 9px; } .m12 { margin-left: 12px; } .m13 { margin-left: 13px; }
.m16 { margin-left: 16px; } .m17 { margin-left: 17px; } .m32 { margin-left: 32px; } .m50 { margin-left: 50px; }
.caret { flex: none; width: 10px; height: 5px; background: #555; clip-path: polygon(0 0, 100% 0, 50% 100%); display: inline-block; }
.caret.pale { background: #b4b4b4; }
.qsep { flex: none; width: 1px; height: 36px; background: #dcdcdc; }
.custom { flex: none; width: 10px; height: 9px; background: linear-gradient(#555 0 2px, transparent 2px 3px, #555 3px); clip-path: polygon(0 0, 100% 0, 100% 3px, 50% 100%, 0 3px); margin-bottom: 8px; }
.title { margin-left: auto; padding-right: 19px; font-size: 18px; color: #555; white-space: nowrap; letter-spacing: .12px; }

.tabs { flex: 1; display: flex; padding-left: 48.500px; align-items: stretch; }
.tab { padding: 5px 22.500px 0; font-size: 17.500px; line-height: 24px; color: #808080; white-space: nowrap; }
.tab.mono { font-family: "Liberation Mono", "Noto Sans CJK SC", monospace; font-size: 15px; padding-top: 7px; }
.tab.m3d { font-size: 16px; padding-top: 6px; }
.tab.active { color: #5f86b0; background: #fff; border: 1px solid #d0d0d0; border-bottom: 2px solid #fff; height: 35px; margin-bottom: -2px; padding: 4px 20px 0; margin-left: 3px; }

.ribbon { height: 140px; display: flex; border-bottom: 2px solid #d6d6d6; flex: none; }
.sep { flex: none; width: 2px; height: 119px; margin-top: 9px; background: #e2e2e2; }
.group { flex: none; display: flex; flex-direction: column; height: 138px; }
.body { height: 104px; display: flex; }
.glabel { height: 24px; line-height: 24px; text-align: center; font-size: 19px; color: #808080; }
.pl3 { padding-left: 3px; } .pl8 { padding-left: 8px; } .pl38 { padding-left: 38px; }
.g1 { width: 64px; } .g2 { width: 160px; } .g3 { width: 275px; } .g4 { width: 265px; } .g5 { width: 480px; }
.i18 { width: 18px; height: 18px; display: block; flex: none; }
.i16 { width: 16px; height: 16px; display: block; flex: none; }
.i14 { width: 14px; height: 14px; display: block; flex: none; }
.g1-body { flex-direction: column; padding: 25px 0 0 17px; }
.g1-row { display: flex; align-items: center; gap: 6px; }
.g1-row2 { margin: 27px 0 0 4px; }
.g1-caret { width: 9px; background: #888; }
.g2-body { padding: 8px 0 0 15px; }
.big { flex: none; display: flex; flex-direction: column; align-items: center; }
.big-i { width: 48px; height: 50px; flex: none; }
.big-t { margin-top: 13px; font-size: 17.500px; line-height: 24px; color: #808080; white-space: nowrap; }
.w36 { width: 36px; } .w50 { width: 50px; } .w70 { width: 70px; } .w71 { width: 71px; } .w72 { width: 72px; }
.ml5 { margin-left: 5px; } .ml18 { margin-left: 18px; }
.big.w50 { margin-left: 11px; }
.dim .big-t { color: #c6c6c6; }
.g3-body { padding: 4px 0 0 7px; }
.vgrid { flex: none; display: grid; grid-template-columns: 50px 50px 50px; grid-auto-rows: 49px; place-items: center; height: 98px; }
.vi30 { width: 30px; height: 30px; } .vi34 { width: 34px; height: 30px; } .vi36 { width: 30px; height: 36px; }
.scroller { flex: none; width: 24px; height: 92px; margin: 1px 0 0 8px; border: 1px solid #c8c8c8; display: flex; flex-direction: column; }
.sc { display: flex; align-items: center; justify-content: center; border-bottom: 1px solid #c8c8c8; }
.sc.a { height: 29px; } .sc.b { height: 30px; } .sc.c { flex: 1; border-bottom: 0; }
.up, .dn { display: block; width: 11px; height: 6px; }
.up { background: #d0d0d0; clip-path: polygon(50% 0, 100% 100%, 0 100%); }
.dn { background: #666; clip-path: polygon(0 0, 100% 0, 50% 100%); }
.dn.bar { height: 9px; clip-path: polygon(0 0, 100% 0, 100% 2px, 0 2px, 0 4px, 100% 4px, 50% 100%, 0 4px); }
.g4-body { padding: 9px 0 0 13px; }
.sgrid { flex: none; margin: -4px 0 0 15px; display: grid; grid-template-columns: repeat(3, 35px); grid-auto-rows: 35px; place-items: center; height: 105px; }
.g5-body { align-items: flex-start; }
.cubes { flex: none; width: 155px; padding: 3px 0 0 9px; display: grid; grid-template-columns: repeat(3, 47.500px); grid-auto-rows: 49px; place-items: center; }
.cb { width: 32px; height: 34px; display: block; }
.cube-sel { width: 48px; height: 48px; border: 4px solid #bcd3ee; display: flex; align-items: center; justify-content: center; background: #fff; }
.sep.inner { height: 103px; }
.styles { flex: none; width: 96px; padding: 5px 0 0 5px; display: grid; grid-template-columns: 35px 35px 16px; grid-auto-rows: 35px; place-items: center; }
.st { width: 35px; height: 35px; display: flex; align-items: center; justify-content: center; }
.st.on { background: #bed5ef; }
.list { flex: none; width: 117px; padding-top: 3px; }
.li { height: 27px; display: flex; align-items: center; gap: 4px; font-size: 18px; color: #808080; white-space: nowrap; }
.li2 { padding-left: 5px; }
.aa { flex: none; width: 16px; height: 16px; display: flex; align-items: flex-end; border-bottom: 1.500px solid #1f3f90; font-family: "Liberation Sans", sans-serif; font-weight: 700; color: #1f3f90; line-height: 12px; overflow: hidden; }
.aa-s { font-size: 9px; align-self: flex-start; line-height: 9px; }
.aa-l { font-size: 12px; line-height: 12px; }
.stylebox { flex: none; width: 110px; padding-top: 3px; }
.combo { height: 34px; margin-top: 3px; border: 1px solid #c8c8c8; border-right: 0; background: #fff; }

.main { flex: 1; display: flex; min-height: 0; background: #fbfdfd; }
.side { flex: none; width: 44px; background: #f6f7f8; padding: 9px 0 0; display: flex; flex-direction: column; }
.sb { display: block; width: 30px; height: 30px; margin: 0 0 21px 5px; flex: none; }
.side-active { margin-top: -3px; height: 109px; padding-top: 3px; border-left: 2px solid #2f5f9c; margin-bottom: 17px; }
.side-active .sb { margin: 0 0 2px 3px; }
.vtext { writing-mode: vertical-rl; font-size: 18px; line-height: 18px; margin-left: 10px; color: #8ba0b8; }
.sb.first { margin-bottom: 22px; }
.sb.tight { margin-bottom: 0; }

.canvas { flex: 1; position: relative; min-width: 0; }
.docbar { height: 39px; margin-left: 2px; padding-top: 2px; border-bottom: 1px solid #2a5298; background: #fff; }
.doctab { width: 330px; height: 36px; background: #2a5298; display: flex; align-items: center; padding-left: 22px; color: #fff; }
.doctab-i { width: 22px; height: 24px; flex: none; }
.doctab-t { margin-left: 3px; font-size: 19px; white-space: nowrap; letter-spacing: -.35px; }
.doctab-x { width: 14px; height: 14px; margin-left: auto; margin-right: 5px; flex: none; }
.splitter { margin-top: 60px; width: 375px; height: 13px; border: 1px solid #999; border-top: 2px solid #8a8a8a; background: linear-gradient(#eee, #bcbcbc); display: flex; justify-content: center; }
.grip { width: 39px; height: 2px; margin-top: 3px; background: repeating-linear-gradient(90deg, #3a5a90 0 1px, transparent 1px 3px); }
.tree { margin-top: 5px; }
.row { height: 24px; display: flex; align-items: flex-start; padding-left: 8px; }
.row.sub { padding-left: 82px; }
.row.feat { padding-left: 109px; }
.exp { flex: none; width: 13px; height: 13px; margin: 4px 11px 0 15px; border: 1px solid #9aa0a6; background: linear-gradient(#fff, #dcdcdc); font: 13px/10px "Liberation Sans", sans-serif; color: #222; text-align: center; }
.exp.none { border: 0; background: none; }
.chk { flex: none; width: 19px; height: 18px; margin: 1px 8px 0 0; border: 2px solid #4d5a78; background: #fff; font: 14px/14px "DejaVu Sans", sans-serif; color: #1c2f5e; text-align: center; }
.chk.none { border: 0; background: none; }
.node { display: inline-flex; align-items: center; height: 22px; border: 1px solid #b4c0c8; background: linear-gradient(#fdfdfe, #e6eaee); padding-right: 8px; color: #111; font-size: 19px; white-space: nowrap; }
.ti { width: 22px; height: 20px; flex: none; }
.nt { margin-left: 7px; line-height: 20px; }
.node.dim { color: #8a8a8a; }
.node.b { font-weight: 700; }
.latin { font-size: 16.500px; }
.squeeze { letter-spacing: -.6px; }
.root { font-size: 18px; color: #111; }
.root .nt { letter-spacing: -.08px; }
.row:first-child .node { width: 298px; }
.seqbar { flex: none; width: 275px; height: 22px; display: flex; align-items: center; background: linear-gradient(#f4a928, #fbd684 50%, #f3a41e); border: 1px solid #efae3c; font-weight: 700; font-size: 19px; color: #000; }
.seq-arrows { width: 29px; text-align: center; color: #fff; font-size: 19px; line-height: 20px; }
.seq-t { line-height: 20px; }
.seq-flag { margin-left: auto; margin-right: 16px; width: 26px; height: 15px; background: #fff; clip-path: polygon(100% 0, 100% 100%, 0 50%); }

.model { position: absolute; left: 376px; top: 184px; width: 600px; height: 500px; }
.edge path, .edge ellipse { stroke: #3e434a; stroke-width: 1px; vector-effect: non-scaling-stroke; }
.edge .nost { stroke: none; }
.f-side { fill: #929aa5; }
.f-top { fill: #a9b0b8; }
.f-surf { fill: #a7aeb6; }
.f-wall { fill: #8c9399; }
.f-rib { fill: #888f9e; }
.f-ribtop { fill: #a8b0b7; }
.f-round { fill: url(#mRound); }
.f-band { fill: url(#mBand); }
.f-right { fill: url(#mSurf); }
.f-rband { fill: url(#mRight); }
.f-lower { fill: url(#mLower); }
.f-bandf { fill: #a9b0b8; }
.f-corner { fill: url(#mCorner); }
.f-neck { fill: url(#mNeck); }
.f-collar { fill: url(#mCollar); }
.f-lip { fill: #a9b0b8; }
.f-holew { fill: url(#mWallIn); }
.f-floor { fill: url(#mFloor); }
.f-bossc { fill: url(#mBoss); }
.f-hole { fill: url(#mHole); }
.thin { fill: none; }
.glow path { fill: none; stroke: #f7f9fc; stroke-width: 13; stroke-linecap: round; }
.glow2 path { fill: none; stroke: #c2c9cf; stroke-width: 50; opacity: .8; }

.wm { position: absolute; left: 925px; top: 670px; display: flex; gap: 9px; align-items: flex-start; }
.wm-hex { width: 72px; height: 82px; flex: none; }
.wb { stroke: #e4f4fd; stroke-width: 1; }
.wm-text { padding-top: 8px; width: 178px; color: #fff; }
.wm-big { font: 700 41px/46px "Noto Sans CJK SC", sans-serif; white-space: nowrap; }
.wm-small { margin-top: 2px; font: 11px/14px "Liberation Sans", sans-serif; letter-spacing: 5.500px; white-space: nowrap; }
```
